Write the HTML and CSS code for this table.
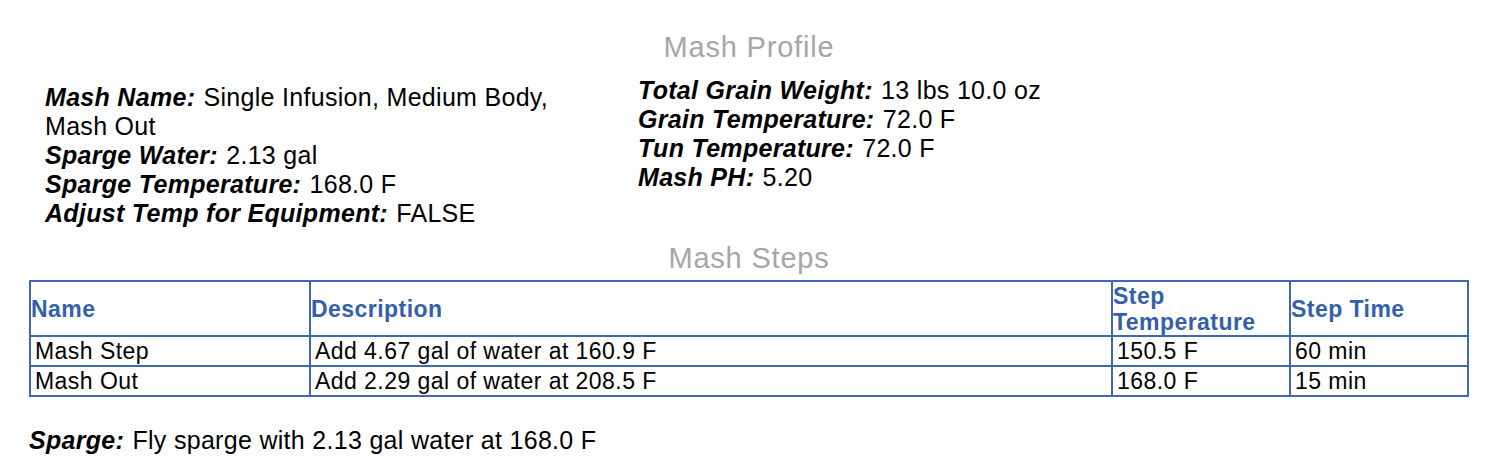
FILE: index.html
```html
<!DOCTYPE html>
<html lang="en">
<head>
<meta charset="utf-8">
<title>Mash Profile</title>
<link rel="stylesheet" href="styles.css">
</head>
<body>
<div class="page">
  <h2 class="section-title">Mash Profile</h2>
  <div class="profile">
    <div class="profile-col profile-col--left">
      <div class="field"><span class="label">Mash Name:</span> Single Infusion, Medium Body, Mash Out</div>
      <div class="field"><span class="label">Sparge Water:</span> 2.13 gal</div>
      <div class="field"><span class="label">Sparge Temperature:</span> 168.0 F</div>
      <div class="field"><span class="label">Adjust Temp for Equipment:</span> FALSE</div>
    </div>
    <div class="profile-col profile-col--right">
      <div class="field"><span class="label">Total Grain Weight:</span> 13 lbs 10.0 oz</div>
      <div class="field"><span class="label">Grain Temperature:</span> 72.0 F</div>
      <div class="field"><span class="label">Tun Temperature:</span> 72.0 F</div>
      <div class="field"><span class="label">Mash PH:</span> 5.20</div>
    </div>
  </div>

  <h2 class="section-title section-title--steps">Mash Steps</h2>
  <table class="steps">
    <thead>
      <tr>
        <th class="c-name">Name</th>
        <th class="c-desc">Description</th>
        <th class="c-temp">Step Temperature</th>
        <th class="c-time">Step Time</th>
      </tr>
    </thead>
    <tbody>
      <tr>
        <td>Mash Step</td>
        <td>Add 4.67 gal of water at 160.9 F</td>
        <td>150.5 F</td>
        <td>60 min</td>
      </tr>
      <tr>
        <td>Mash Out</td>
        <td>Add 2.29 gal of water at 208.5 F</td>
        <td>168.0 F</td>
        <td>15 min</td>
      </tr>
    </tbody>
  </table>

  <p class="sparge"><span class="label">Sparge:</span> Fly sparge with 2.13 gal water at 168.0 F</p>
</div>
</body>
</html>
```

FILE: styles.css
```css
html, body {
  margin: 0;
  padding: 0;
  background: #ffffff;
}

body {
  font-family: "Liberation Sans", Arial, Helvetica, sans-serif;
  color: #000000;
}

.page {
  width: 1440px;
  margin-left: 29px;
  padding-top: 31px;
}

.section-title {
  margin: 0;
  font-size: 29px;
  line-height: 32px;
  font-weight: normal;
  color: #a6a6a6;
  text-align: center;
  letter-spacing: 0.8px;
}

.profile {
  display: flex;
  align-items: flex-start;
  margin-top: 13px;
}

.profile-col {
  font-size: 25px;
  line-height: 29px;
  letter-spacing: 0.3px;
}

.profile-col--left {
  width: 540px;
  margin-left: 16px;
  padding-top: 7px;
}

.profile-col--right {
  margin-left: 53px;
}

.label {
  font-weight: bold;
  font-style: italic;
  margin-right: 1px;
}

.section-title--steps {
  margin-top: 14px;
}

.steps {
  margin-top: 6px;
  width: 1440px;
  border: 1px solid #4068ad;
  border-collapse: separate;
  border-spacing: 0;
  table-layout: fixed;
  font-size: 23px;
  letter-spacing: 0.45px;
}

.steps th,
.steps td {
  border: 1px solid #4068ad;
  box-sizing: border-box;
  text-align: left;
  vertical-align: middle;
}

.steps th {
  padding: 0;
  line-height: 26px;
  font-weight: bold;
  color: #3360a9;
  height: 55px;
}

.steps td {
  padding: 0 0 0 4px;
  line-height: 28px;
}

.c-name { width: 280px; }
.c-desc { width: 802px; }
.c-temp { width: 178px; }
.c-time { width: 178px; }

.sparge {
  margin: 29px 0 0 0;
  font-size: 25px;
  line-height: 29px;
  letter-spacing: 0.3px;
}
```
